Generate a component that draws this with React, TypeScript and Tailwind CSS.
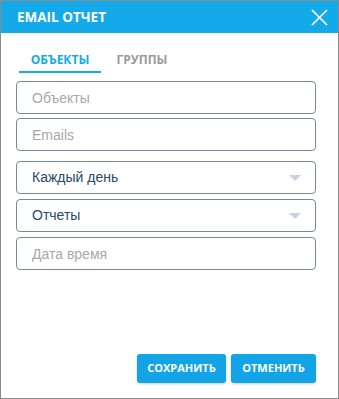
import { useState } from "react";

const inputBox =
  "h-[33px] w-full rounded-[4px] border border-[#7589a0] bg-white pl-[15px] pr-3 text-[14px] outline-none";

const Caret = () => (
  <svg width="12" height="6" viewBox="0 0 12 6" className="shrink-0">
    <path d="M0 0 L12 0 L6 6 Z" fill="#c6d4e2" />
  </svg>
);

const SelectBox = ({ value }: { value: string }) => (
  <div className={`${inputBox} flex items-center justify-between pr-[14px] text-[#2a4868]`}>
    <span>{value}</span>
    <Caret />
  </div>
);

const App = () => {
  const [tab, setTab] = useState<"objects" | "groups">("objects");

  return (
    <div
      className="flex h-[399px] w-[339px] flex-col border border-[#8a8a8a] bg-white"
      style={{ fontFamily: "'Liberation Sans', Arial, sans-serif" }}
    >
      <div className="flex h-[32px] shrink-0 items-center justify-between bg-[#14a9e9] pl-4 pr-[10px]">
        <span className="font-['Open_Sans',sans-serif] text-[13.5px] font-bold text-white">
          EMAIL ОТЧЕТ
        </span>
        <button className="flex h-[18px] w-[18px] items-center justify-center">
          <svg width="17" height="17" viewBox="0 0 17 17">
            <path d="M1 1 L16 16 M16 1 L1 16" stroke="#fff" strokeWidth="1.6" />
          </svg>
        </button>
      </div>

      <div className="flex flex-1 flex-col pl-[15px] pr-[22px]">
        <div className="mt-[14px] flex font-['Open_Sans',sans-serif] text-[12px] font-bold">
          <button
            onClick={() => setTab("objects")}
            className={`ml-[3px] h-[26px] w-[82px] border-b-2 pt-[1px] ${
              tab === "objects" ? "border-[#14a9e9] text-[#14a9e9]" : "border-transparent text-[#9a9a9a]"
            }`}
          >
            ОБЪЕКТЫ
          </button>
          <button
            onClick={() => setTab("groups")}
            className={`ml-[8px] h-[26px] w-[66px] border-b-2 pt-[1px] ${
              tab === "groups" ? "border-[#14a9e9] text-[#14a9e9]" : "border-transparent text-[#9a9a9a]"
            }`}
          >
            ГРУППЫ
          </button>
        </div>

        <input className={`${inputBox} mt-[8px] placeholder:text-[#a8a8a8]`} placeholder="Объекты" />
        <input className={`${inputBox} mt-[4px] placeholder:text-[#a8a8a8]`} placeholder="Emails" />

        <div className="mt-[10px]">
          <SelectBox value="Каждый день" />
        </div>
        <div className="mt-[5px]">
          <SelectBox value="Отчеты" />
        </div>
        <input className={`${inputBox} mt-[5px] placeholder:text-[#a8a8a8]`} placeholder="Дата время" />

        <div className="flex-1" />

        <div className="mb-[15px] flex justify-end gap-[5px] font-['Open_Sans',sans-serif] text-[11px] font-bold text-white">
          <button className="h-[29px] w-[89px] rounded-[3px] bg-[#12a4e7] shadow-[0_1px_3px_rgba(0,0,0,0.2)]">
            СОХРАНИТЬ
          </button>
          <button className="h-[29px] w-[85px] rounded-[3px] bg-[#12a4e7] shadow-[0_1px_3px_rgba(0,0,0,0.2)]">
            ОТМЕНИТЬ
          </button>
        </div>
      </div>
    </div>
  );
};

export default App;
